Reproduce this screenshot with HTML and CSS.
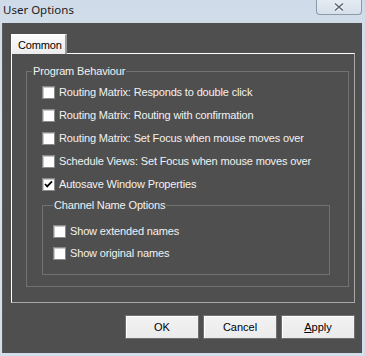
FILE: index.html
```html
<!DOCTYPE html>
<html lang="en">
<head>
  <meta charset="UTF-8">
  <title>User Options</title>
  <link rel="stylesheet" href="styles.css">
</head>
<body>
  <div class="window">
    <div class="titlebar">
      <span class="title">User Options</span>
      <button class="close" aria-label="Close">
        <svg width="12" height="10" viewBox="0 0 12 10">
          <path d="M2 1.5 L10 8.5 M10 1.5 L2 8.5" stroke="#f4f6f8" stroke-width="3.2" fill="none"/>
          <path d="M2 1.5 L10 8.5 M10 1.5 L2 8.5" stroke="#5d6670" stroke-width="1.6" fill="none"/>
        </svg>
      </button>
    </div>
    <div class="client">
      <div class="tabs">
        <div class="tab active">Common</div>
      </div>
      <div class="panel">
        <fieldset class="group">
          <legend>Program Behaviour</legend>
          <div class="checks">
            <label class="check"><span class="box"></span>Routing Matrix: Responds to double click</label>
            <label class="check"><span class="box"></span>Routing Matrix: Routing with confirmation</label>
            <label class="check"><span class="box"></span>Routing Matrix: Set Focus when mouse moves over</label>
            <label class="check"><span class="box"></span>Schedule Views: Set Focus when mouse moves over</label>
            <label class="check"><span class="box checked">
              <svg width="9" height="9" viewBox="0 0 9 9"><path d="M1 4 L3.2 6.4 L8 1.4" stroke="#000" stroke-width="1.8" fill="none"/></svg>
            </span>Autosave Window Properties</label>
          </div>
          <fieldset class="group sub">
            <legend>Channel Name Options</legend>
            <div class="checks tight">
              <label class="check"><span class="box"></span>Show extended names</label>
              <label class="check"><span class="box"></span>Show original names</label>
            </div>
          </fieldset>
        </fieldset>
      </div>
      <div class="buttons">
        <button class="btn">OK</button>
        <button class="btn">Cancel</button>
        <button class="btn"><u>A</u>pply</button>
      </div>
    </div>
  </div>
</body>
</html>
```

FILE: styles.css
```css
body {
  margin: 0;
  background: #d5e0ec;
  font-family: 'Liberation Sans', Arial, sans-serif;
}
.window {
  width: 365px;
  height: 356px;
  display: flex;
  flex-direction: column;
  background: linear-gradient(#cfdbe8, #dbe5f0 40%, #d3deea);
}
.titlebar {
  height: 23px;
  display: flex;
  align-items: flex-start;
  justify-content: space-between;
  flex-shrink: 0;
}
.title {
  font-family: 'Noto Sans', sans-serif;
  font-size: 11.5px;
  color: #1b1b1b;
  padding: 2px 0 0 3px;
}
.close {
  width: 46px;
  height: 15px;
  margin-right: 3px;
  padding: 0;
  border: 1px solid #8d9aa8;
  border-top: none;
  border-radius: 0 0 4px 4px;
  background: linear-gradient(#e4ebf3, #d6e0eb);
  display: flex;
  align-items: center;
  justify-content: center;
}
.client {
  flex: 1;
  margin: 0 3px 3px 2px;
  background: #4f4f4f;
  border-left: 1px solid #5c5c5c;
  padding: 11px 7px 0 8px;
  display: flex;
  flex-direction: column;
}
.tabs {
  display: flex;
  height: 20px;
  position: relative;
  z-index: 1;
}
.tab {
  width: 56px;
  height: 20px;
  box-sizing: border-box;
  background: linear-gradient(#fbfbfb, #ececec);
  border-top: 1px solid #fff;
  border-left: 1px solid #fff;
  border-right: 2px solid #9a9a9a;
  font-size: 11px;
  letter-spacing: -0.15px;
  color: #000;
  padding: 4px 0 0 6px;
}
.panel {
  height: 250px;
  box-sizing: border-box;
  margin-top: -1px;
  border-top: 1px solid #fff;
  border-left: 1px solid #fff;
  border-right: 1px solid #a8a8a8;
  border-bottom: 1px solid #a8a8a8;
  padding: 11px 5px 0 14px;
}
.group {
  margin: 0;
  border: 1px solid #727272;
  padding: 0 0 0 5px;
  color: #f2f2f2;
  font-size: 11px;
  letter-spacing: -0.15px;
}
.group legend {
  padding: 0 1px;
  line-height: 13px;
}
.panel > .group {
  height: 222px;
  box-sizing: border-box;
}
.checks {
  display: flex;
  flex-direction: column;
  gap: 10px;
  padding: 8px 0 0 10px;
}
.check {
  display: flex;
  align-items: center;
  gap: 4px;
  height: 13px;
  line-height: 13px;
  white-space: nowrap;
}
.box {
  width: 13px;
  height: 13px;
  box-sizing: border-box;
  background: #fff;
  border: 1px solid #8a8a8a;
  box-shadow: inset 1px 1px 0 #c8c8c8;
  display: flex;
  align-items: center;
  justify-content: center;
  flex-shrink: 0;
}
.sub {
  margin: 8px 18px 0 10px;
  height: 76px;
  box-sizing: border-box;
  padding-left: 10px;
}
.checks.tight {
  gap: 9px;
  padding: 13px 0 0 0;
}
.buttons {
  display: flex;
  justify-content: flex-end;
  gap: 4px;
  margin-top: 12px;
}
.btn {
  width: 74px;
  height: 24px;
  font-family: 'Liberation Sans', Arial, sans-serif;
  font-size: 11px;
  color: #000;
  background: linear-gradient(#f2f2f2, #ebebeb);
  border: 1px solid #707070;
  box-shadow: inset 1px 1px 0 #fff;
  padding: 0;
}
```
